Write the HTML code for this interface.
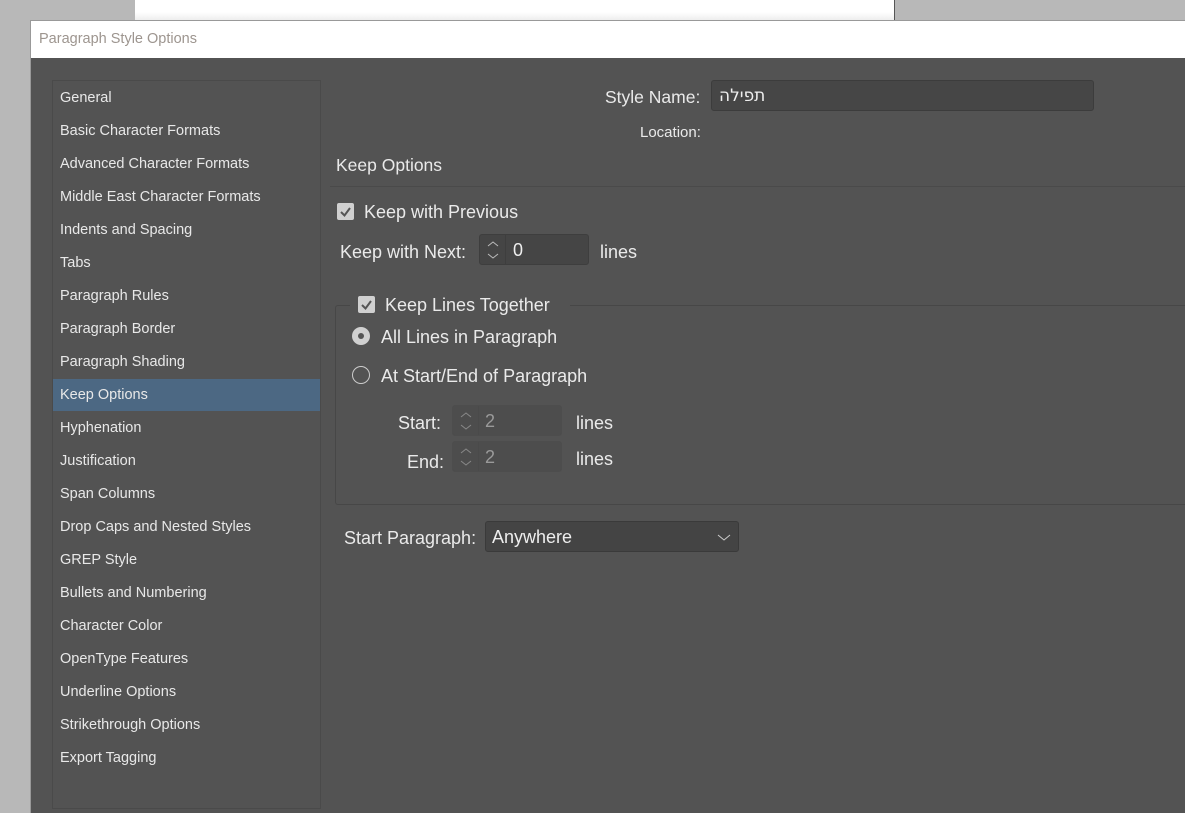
<!DOCTYPE html>
<html><head><meta charset="utf-8"><style>
*{box-sizing:border-box;margin:0;padding:0}
body{width:1185px;height:813px;overflow:hidden;background:#b8b8b8;font-family:"Liberation Sans","Noto Sans CJK SC",sans-serif;position:relative;color:#e6e6e6}
.abs{position:absolute}
.page{left:135px;top:0;width:760px;height:20px;background:linear-gradient(#fff 60%,#eee);border-right:1px solid #555}
.dlg{left:30px;top:20px;width:1155px;height:793px;background:#535353;border-top:1px solid #999;border-left:1px solid #999}
.title{left:0;top:0;width:100%;height:37px;background:#fff;color:#9d958f;font-size:14.5px;padding:10px 0 0 8px}
.list{left:21px;top:59px;width:269px;height:729px;border:1px solid #4a4a4a}
.it{position:absolute;left:0;width:267px;height:32px;line-height:32px;padding-left:7px;font-size:14.5px;color:#e8e8e8}
.sel{background:#4c6883}
.t{position:absolute;font-size:18px;color:#eaeaea;white-space:nowrap}
.cb{position:absolute;width:17px;height:17px;background:#d0d0d0;border-radius:2px}
.cb svg{display:block}
.spin{position:absolute;height:31px;border:1px solid #3e3e3e;border-radius:3px;background:#454545}
.sp{position:absolute;left:0;top:0;width:26px;height:100%;border-right:1px solid #3e3e3e}
.rad{position:absolute;width:18px;height:18px;border-radius:50%}
</style></head><body>
<div class="abs page"></div>
<div class="abs dlg">
<div class="abs title">Paragraph Style Options</div>
<div class="abs list">
<div class="it" style="top:1px">General</div>
<div class="it" style="top:34px">Basic Character Formats</div>
<div class="it" style="top:67px">Advanced Character Formats</div>
<div class="it" style="top:100px">Middle East Character Formats</div>
<div class="it" style="top:133px">Indents and Spacing</div>
<div class="it" style="top:166px">Tabs</div>
<div class="it" style="top:199px">Paragraph Rules</div>
<div class="it" style="top:232px">Paragraph Border</div>
<div class="it" style="top:265px">Paragraph Shading</div>
<div class="it sel" style="top:298px">Keep Options</div>
<div class="it" style="top:331px">Hyphenation</div>
<div class="it" style="top:364px">Justification</div>
<div class="it" style="top:397px">Span Columns</div>
<div class="it" style="top:430px">Drop Caps and Nested Styles</div>
<div class="it" style="top:463px">GREP Style</div>
<div class="it" style="top:496px">Bullets and Numbering</div>
<div class="it" style="top:529px">Character Color</div>
<div class="it" style="top:562px">OpenType Features</div>
<div class="it" style="top:595px">Underline Options</div>
<div class="it" style="top:628px">Strikethrough Options</div>
<div class="it" style="top:661px">Export Tagging</div>
</div>
</div>
<div class="t" style="left:605px;top:87px;font-size:17.5px">Style Name:</div>
<div class="abs" style="left:711px;top:80px;width:383px;height:31px;background:#464646;border:1px solid #3c3c3c;border-radius:3px;font-size:17px;padding:5px 0 0 7px;color:#eee;font-family:'DejaVu Sans',sans-serif">תפילה</div>
<div class="t" style="left:640px;top:124px;font-size:15px">Location:</div>
<div class="t" style="left:336px;top:155px;font-size:17.5px">Keep Options</div>
<div class="abs" style="left:330px;top:186px;width:855px;height:1px;background:#4a4a4a"></div>

<div class="cb" style="left:337px;top:203px"><svg width="17" height="17"><path d="M4 9 L7.5 12.5 L13 5" stroke="#555" stroke-width="2" fill="none"/></svg></div>
<div class="t" style="left:364px;top:202px">Keep with Previous</div>
<div class="t" style="left:340px;top:242px">Keep with Next:</div>
<div class="spin" style="left:479px;top:234px;width:110px"><div class="sp"><svg width="26" height="29"><path d="M8 11 L13 7 L18 11 M8 19 L13 23 L18 19" stroke="#bbb" fill="none"/></svg></div><span style="position:absolute;left:33px;top:5px;font-size:18px;color:#eee">0</span></div>
<div class="t" style="left:600px;top:242px">lines</div>

<div class="abs" style="left:335px;top:305px;width:850px;height:200px;border:1px solid #474747;border-right:none;border-radius:3px 0 0 3px"></div>
<div class="abs" style="left:350px;top:292px;width:220px;height:26px;background:#535353"></div>
<div class="cb" style="left:358px;top:296px"><svg width="17" height="17"><path d="M4 9 L7.5 12.5 L13 5" stroke="#555" stroke-width="2" fill="none"/></svg></div>
<div class="t" style="left:385px;top:295px">Keep Lines Together</div>
<div class="rad" style="left:352px;top:327px;background:#d0d0d0"><div style="position:absolute;left:6px;top:6px;width:6px;height:6px;border-radius:50%;background:#555"></div></div>
<div class="t" style="left:381px;top:327px">All Lines in Paragraph</div>
<div class="rad" style="left:352px;top:366px;border:1.5px solid #ccc"></div>
<div class="t" style="left:381px;top:366px">At Start/End of Paragraph</div>

<div class="t" style="left:398px;top:413px">Start:</div>
<div class="spin" style="left:452px;top:405px;width:110px;height:31px;background:#4d4d4d;border-color:#4d4d4d"><div class="sp" style="border-color:#4a4a4a"><svg width="26" height="29"><path d="M8 11 L13 7 L18 11 M8 19 L13 23 L18 19" stroke="#888" fill="none"/></svg></div><span style="position:absolute;left:32px;top:5px;font-size:18px;color:#9a9a9a">2</span></div>
<div class="t" style="left:576px;top:413px">lines</div>
<div class="t" style="left:407px;top:452px">End:</div>
<div class="spin" style="left:452px;top:441px;width:110px;height:31px;background:#4d4d4d;border-color:#4d4d4d"><div class="sp" style="border-color:#4a4a4a"><svg width="26" height="29"><path d="M8 11 L13 7 L18 11 M8 19 L13 23 L18 19" stroke="#888" fill="none"/></svg></div><span style="position:absolute;left:32px;top:5px;font-size:18px;color:#9a9a9a">2</span></div>
<div class="t" style="left:576px;top:449px">lines</div>

<div class="t" style="left:344px;top:528px">Start Paragraph:</div>
<div class="abs" style="left:485px;top:521px;width:254px;height:31px;background:#444;border:1px solid #3a3a3a;border-radius:3px"><span style="position:absolute;left:6px;top:5px;font-size:18px;color:#eee">Anywhere</span><svg style="position:absolute;right:7px;top:10px" width="14" height="10"><path d="M1 3 L7 8 L13 3" stroke="#ccc" fill="none"/></svg></div>
</body></html>
